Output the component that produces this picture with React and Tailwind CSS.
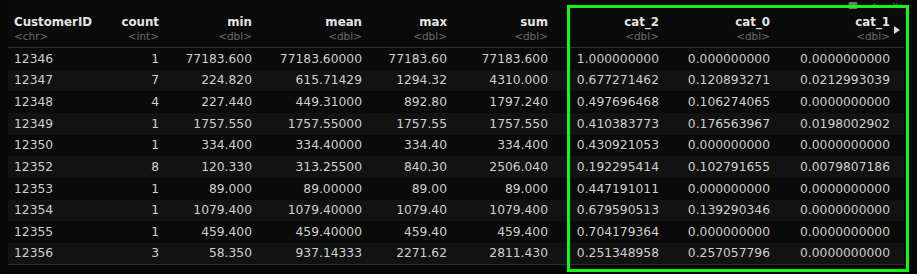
import React from "react";

const cols = [
  { name: "CustomerID", type: "<chr>", left: true },
  { name: "count", type: "<int>" },
  { name: "min", type: "<dbl>" },
  { name: "mean", type: "<dbl>" },
  { name: "max", type: "<dbl>" },
  { name: "sum", type: "<dbl>" },
  { name: "cat_2", type: "<dbl>" },
  { name: "cat_0", type: "<dbl>" },
  { name: "cat_1", type: "<dbl>" },
];

const rows = [
  ["12346", "1", "77183.600", "77183.60000", "77183.60", "77183.600", "1.000000000", "0.000000000", "0.0000000000"],
  ["12347", "7", "224.820", "615.71429", "1294.32", "4310.000", "0.677271462", "0.120893271", "0.0212993039"],
  ["12348", "4", "227.440", "449.31000", "892.80", "1797.240", "0.497696468", "0.106274065", "0.0000000000"],
  ["12349", "1", "1757.550", "1757.55000", "1757.55", "1757.550", "0.410383773", "0.176563967", "0.0198002902"],
  ["12350", "1", "334.400", "334.40000", "334.40", "334.400", "0.430921053", "0.000000000", "0.0000000000"],
  ["12352", "8", "120.330", "313.25500", "840.30", "2506.040", "0.192295414", "0.102791655", "0.0079807186"],
  ["12353", "1", "89.000", "89.00000", "89.00", "89.000", "0.447191011", "0.000000000", "0.0000000000"],
  ["12354", "1", "1079.400", "1079.40000", "1079.40", "1079.400", "0.679590513", "0.139290346", "0.0000000000"],
  ["12355", "1", "459.400", "459.40000", "459.40", "459.400", "0.704179364", "0.000000000", "0.0000000000"],
  ["12356", "3", "58.350", "937.14333", "2271.62", "2811.430", "0.251348958", "0.257057796", "0.0000000000"],
];

const gridCls =
  "grid grid-cols-[100px_57px_93px_110px_85px_101px_111px_111px_120px_8px]";

export default function App() {
  return (
    <div
      className="relative w-[917px] h-[274px] overflow-hidden bg-[#060606]"
      style={{ fontFamily: '"DejaVu Sans", "Liberation Sans", sans-serif' }}
    >
      <div className="ml-[8px] w-[896px] bg-[#0a0a0a]">
        <div className={`${gridCls} pt-[14px] pb-[4px] border-b border-[#2e2e2e]`}>
          {cols.map((c) => (
            <div
              key={c.name}
              className={`px-[6px] flex flex-col ${c.left ? "items-start" : "items-end"}`}
            >
              <span className="text-[11.8px] leading-[16px] font-bold text-[#e4e4e4]">
                {c.name}
              </span>
              <span className="text-[10.5px] leading-[13px] text-[#6a6a6a]">{c.type}</span>
            </div>
          ))}
          <div className="flex items-start pt-[12px] -ml-[2px]">
            <svg width="6" height="8" viewBox="0 0 6 8">
              <path d="M0 0 L6 4 L0 8 Z" fill="#d8d8d8" />
            </svg>
          </div>
        </div>
        {rows.map((r, i) => (
          <div
            key={r[0]}
            className={`${gridCls} h-[21.67px] items-center ${
              i % 2 === 1 ? "bg-[#121212]" : "bg-[#0a0a0a]"
            } ${i === rows.length - 1 ? "border-b border-[#2e2e2e]" : ""}`}
          >
            {r.map((v, j) => (
              <div
                key={j}
                className={`px-[6px] text-[12.3px] leading-[16px] text-[#cfcfcf] ${
                  j === 0 ? "text-left" : "text-right"
                }`}
              >
                {v}
              </div>
            ))}
            <div />
          </div>
        ))}
      </div>

      {/* top-right pane icons */}
      <div className="absolute top-[1px] left-[848px] flex items-center gap-[12px]">
        <svg width="10" height="9" viewBox="0 0 10 9">
          <rect x="0.5" y="1" width="9" height="7" rx="1.5" fill="#777777" />
        </svg>
        <svg width="9" height="9" viewBox="0 0 9 9">
          <path d="M1.5 6 L4.5 3 L7.5 6" stroke="#4a4a4a" strokeWidth="1.3" fill="none" />
        </svg>
        <svg width="9" height="9" viewBox="0 0 9 9">
          <path d="M2 2 L7 7 M7 2 L2 7" stroke="#4a4a4a" strokeWidth="1.3" fill="none" />
        </svg>
      </div>

      {/* green highlight annotation */}
      <div className="absolute left-[567px] top-[5px] w-[342px] h-[267px] border-[3px] border-[#0dfc0d] pointer-events-none" />
    </div>
  );
}
